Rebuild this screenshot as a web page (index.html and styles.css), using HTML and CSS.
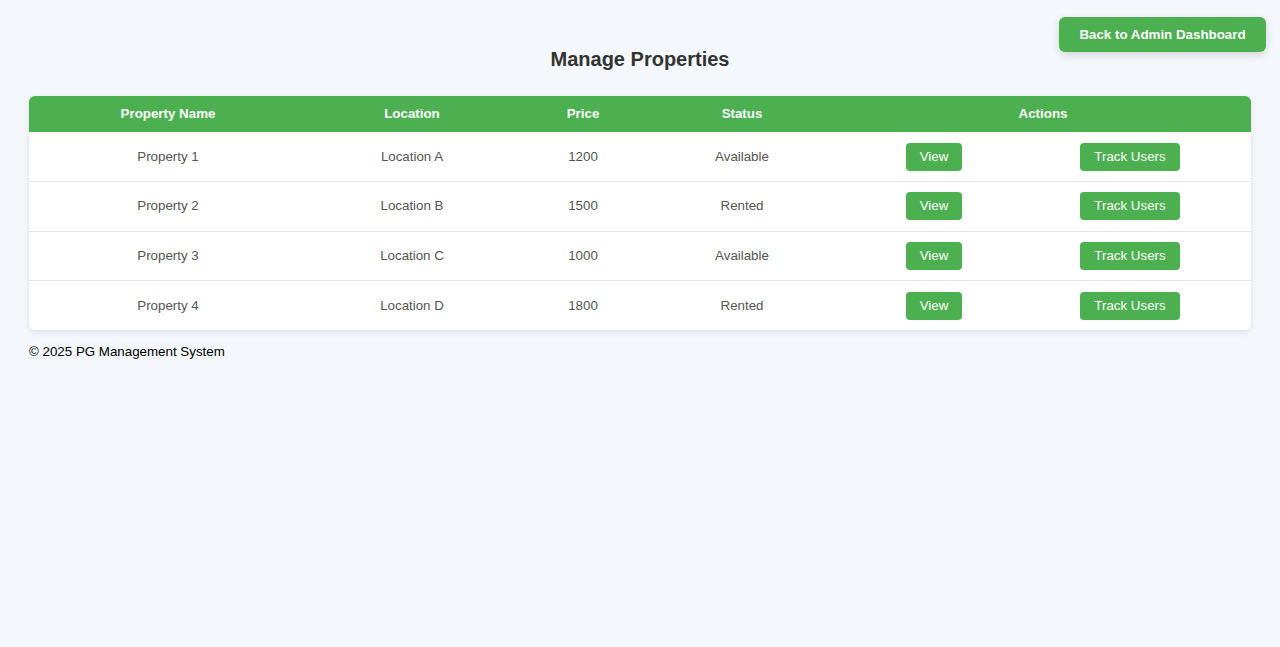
FILE: index.html
```html
<!DOCTYPE html>
<html lang="en">
<head>
<meta charset="UTF-8">
<title>Manage Properties</title>
<link rel="stylesheet" href="styles.css">
</head>
<body>
<a class="back-btn" href="#">Back to Admin Dashboard</a>
<div class="container">
  <h2 class="title">Manage Properties</h2>
  <table class="props">
    <colgroup>
      <col class="c1"><col class="c2"><col class="c3"><col class="c4"><col class="c5"><col class="c6">
    </colgroup>
    <thead>
      <tr>
        <th>Property Name</th>
        <th>Location</th>
        <th>Price</th>
        <th>Status</th>
        <th colspan="2">Actions</th>
      </tr>
    </thead>
    <tbody>
      <tr>
        <td>Property 1</td><td>Location A</td><td>1200</td><td>Available</td>
        <td class="view"><a class="btn" href="#">View</a></td>
        <td class="track"><a class="btn" href="#">Track Users</a></td>
      </tr>
      <tr>
        <td>Property 2</td><td>Location B</td><td>1500</td><td>Rented</td>
        <td class="view"><a class="btn" href="#">View</a></td>
        <td class="track"><a class="btn" href="#">Track Users</a></td>
      </tr>
      <tr>
        <td>Property 3</td><td>Location C</td><td>1000</td><td>Available</td>
        <td class="view"><a class="btn" href="#">View</a></td>
        <td class="track"><a class="btn" href="#">Track Users</a></td>
      </tr>
      <tr>
        <td>Property 4</td><td>Location D</td><td>1800</td><td>Rented</td>
        <td class="view"><a class="btn" href="#">View</a></td>
        <td class="track"><a class="btn" href="#">Track Users</a></td>
      </tr>
    </tbody>
  </table>
  <footer class="footer">&copy; 2025 PG Management System</footer>
</div>
</body>
</html>
```

FILE: styles.css
```css
html, body {
  margin: 0;
  padding: 0;
}
body {
  background: #f4f7fb;
  font-family: "Liberation Sans", Arial, sans-serif;
  color: #000;
  position: relative;
  min-height: 647px;
}
.container {
  padding: 48px 29px 20px 29px;
}
.title {
  margin: 0 0 25px 0;
  text-align: center;
  font-size: 20px;
  line-height: 23px;
  font-weight: bold;
  color: #333;
}
.back-btn {
  position: absolute;
  top: 17px;
  right: 14px;
  width: 207px;
  height: 35px;
  box-sizing: border-box;
  display: flex;
  align-items: center;
  justify-content: center;
  background: #4caf50;
  color: #fff;
  font-size: 13.333px;
  font-weight: bold;
  text-decoration: none;
  border-radius: 6px;
  box-shadow: 0 3px 8px rgba(0,0,0,0.15);
}
.props {
  width: 100%;
  border-collapse: collapse;
  background: #fff;
  border-radius: 6px;
  overflow: hidden;
  box-shadow: 0 2px 6px rgba(0,0,0,0.1);
  table-layout: fixed;
}
.c1 { width: 278px; }
.c2 { width: 210px; }
.c3 { width: 132px; }
.c4 { width: 186px; }
.c5 { width: 198px; }
.props th {
  box-sizing: border-box;
  background: #4caf50;
  color: #fff;
  font-weight: bold;
  font-size: 13.333px;
  line-height: 16px;
  padding: 10px;
  text-align: center;
}
.props td {
  box-sizing: border-box;
  font-size: 13.333px;
  line-height: 16px;
  color: #555;
  text-align: center;
  padding: 10px;
  height: 49.5px;
  border-bottom: 1px solid #e6e6e6;
}
.props tbody tr:last-child td {
  border-bottom: none;
}
.props td.track {
  padding-right: 34px;
}
.btn {
  display: inline-block;
  vertical-align: middle;
  background: #4caf50;
  color: #fff;
  text-decoration: none;
  font-size: 13.333px;
  line-height: 16px;
  padding: 6px 14px;
  border-radius: 4px;
}
.footer {
  margin-top: 14px;
  font-size: 13.333px;
  line-height: 16px;
  color: #000;
}
```
